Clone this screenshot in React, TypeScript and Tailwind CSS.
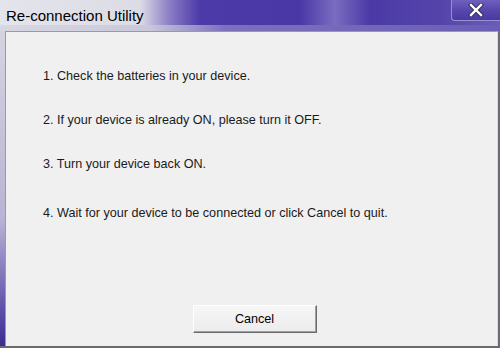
import React from 'react';

const steps = [
  { text: '1. Check the batteries in your device.', mt: 'mt-[36px]' },
  { text: '2. If your device is already ON, please turn it OFF.', mt: 'mt-[28px]' },
  { text: '3. Turn your device back ON.', mt: 'mt-[28px]' },
  { text: '4. Wait for your device to be connected or click Cancel to quit.', mt: 'mt-[33px]' },
];

const App: React.FC = () => {
  return (
    <div className="w-[500px] h-[348px] flex flex-col overflow-hidden bg-[#4a3aa0] font-['Liberation_Sans',sans-serif]">
      {/* Title bar */}
      <div className="relative h-[31px] shrink-0 bg-[linear-gradient(90deg,#e4e4ec_0%,#dcdce6_28%,#8a7cc4_34%,#4c3aa8_40%,#4a38a6_60%,#7a6cc0_67%,#4b3aa6_74%,#5444aa_88%,#6a5cb8_100%)]">
        <div className="absolute inset-x-0 bottom-0 h-[6px] bg-[linear-gradient(90deg,#d8d8e4_0%,#c8c8da_30%,#7c70bc_45%,#6a5eb4_100%)]" />
        <div className="absolute left-[6px] top-[5px] text-[15px] leading-[22px] text-black">Re-connection Utility</div>
        {/* Close button */}
        <div className="absolute right-0 top-0 w-[49px] h-[21px] rounded-bl-[4px] border-l border-b border-[#9a90d0] bg-[linear-gradient(180deg,#6e60bc_0%,#5848ae_50%,#4838a2_100%)] flex items-center justify-center">
          <svg width="16" height="14" viewBox="0 0 16 14">
            <path d="M3 2 L13 12 M13 2 L3 12" stroke="#303050" strokeWidth="4.2" strokeLinecap="square" />
            <path d="M3 2 L13 12 M13 2 L3 12" stroke="#ffffff" strokeWidth="2.4" strokeLinecap="square" />
          </svg>
        </div>
      </div>

      {/* Body row */}
      <div className="flex flex-1 min-h-0">
        <div className="w-[5px] shrink-0 bg-[linear-gradient(180deg,#d4d4e0_0%,#b8b4d4_60%,#5a4aa8_90%,#3c2c90_100%)]" />
        <div className="flex-1 flex flex-col bg-[#f0f0f0] border-t border-l border-[#9a9aa6] border-r border-r-[#dcdce4]">
          <div className="flex flex-col pl-[37px] text-[12.6px] leading-[16px] text-[#1a1a1a]">
            {steps.map((s, i) => (
              <div key={i} className={s.mt}>{s.text}</div>
            ))}
          </div>
          <div className="flex-1" />
          <div className="flex justify-center pb-[13px] pl-[6px]">
            <div className="w-[124px] h-[28px] flex items-center justify-center text-[12.6px] text-black bg-[linear-gradient(180deg,#f6f6f6_0%,#ececec_100%)] border border-t-white border-l-white border-r-[#6a6a6a] border-b-[#6a6a6a] shadow-[inset_-1px_-1px_0_#a0a0a0]">
              Cancel
            </div>
          </div>
        </div>
        <div className="w-[2px] shrink-0 bg-[#6a6a78]" />
      </div>
      <div className="h-[2px] shrink-0 bg-[#6a6a6a]" />
    </div>
  );
};

export default App;
